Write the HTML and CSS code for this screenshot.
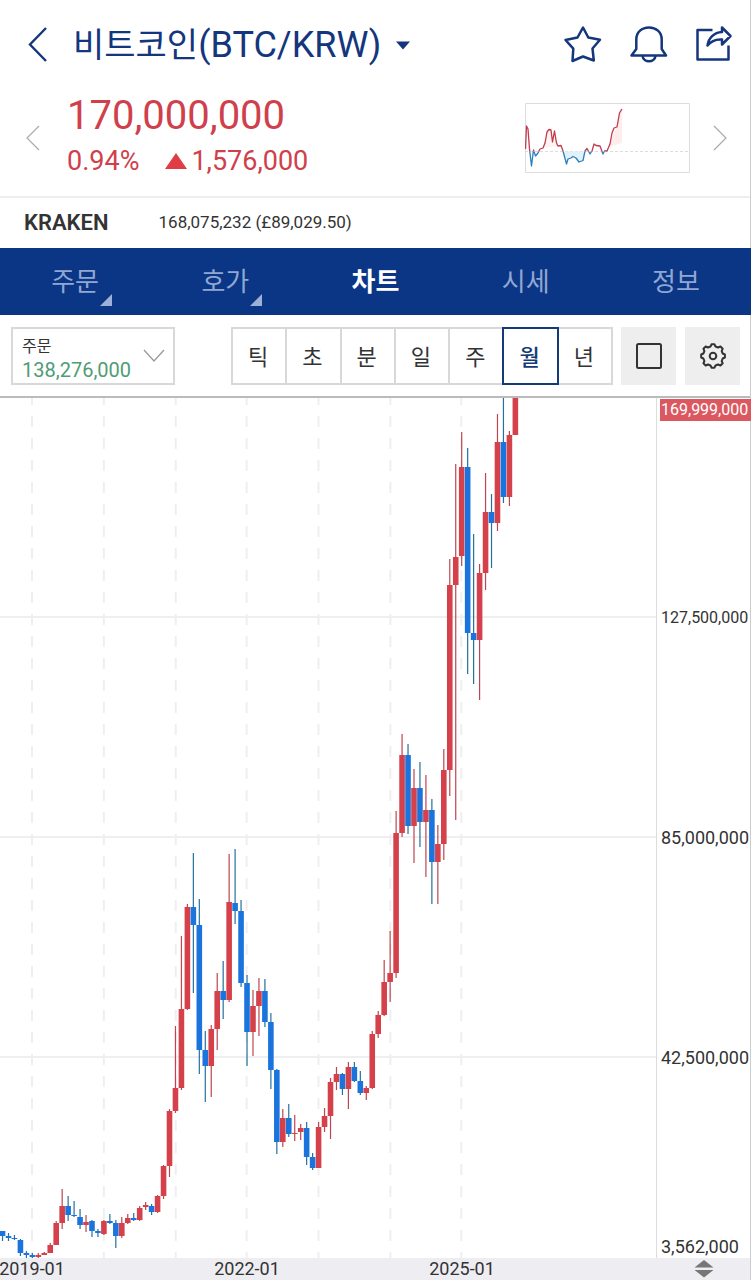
FILE: index.html
```html
<!DOCTYPE html>
<html lang="ko">
<head>
<meta charset="utf-8">
<meta name="viewport" content="width=device-width, initial-scale=1">
<title>비트코인(BTC/KRW)</title>
<link rel="stylesheet" href="styles.css">
</head>
<body>
<div class="app">
  <header class="topbar">
    <button class="icon-btn back" aria-label="뒤로">
      <svg width="20" height="36" viewBox="0 0 20 36"><path d="M18 2 2 18.500 18 35" fill="none" stroke="currentColor" stroke-width="2.400"/></svg>
    </button>
    <h1 class="title">
      <button class="title-btn" aria-haspopup="listbox"><span class="title-ko">비트코인</span><span>(BTC/KRW)</span>
        <svg class="caret" width="16" height="9" viewBox="0 0 16 9"><path d="M1 .5h14L8 8.500z" fill="currentColor"/></svg>
      </button>
    </h1>
    <div class="actions">
      <button class="icon-btn" aria-label="즐겨찾기">
        <svg width="40" height="40" viewBox="0 0 40 40"><path d="M20 3.500 25.300 13.500 37 15.800 29.500 24.500 30.800 36.500 20 32.500 9.500 37 10.300 24.700 2.500 16 14.500 13.500z" fill="none" stroke="currentColor" stroke-width="2.500" stroke-linejoin="round"/></svg>
      </button>
      <button class="icon-btn" aria-label="알림">
        <svg width="40" height="40" viewBox="0 0 40 40"><g fill="none" stroke="currentColor" stroke-width="2.500" stroke-linejoin="round"><path d="M2.500 31.500H37L32.700 25V15.500C32.700 8 27 3.500 20 3.500S7.300 8 7.300 15.500V25z"/><path d="M13.500 32c1 7 12 7 13 0"/></g></svg>
      </button>
      <button class="icon-btn" aria-label="공유">
        <svg width="40" height="40" viewBox="0 0 40 40"><g fill="none" stroke="currentColor" stroke-width="2.500" stroke-linejoin="round"><path d="M17.500 6H2.500V35.500H33.500V21.500"/><path d="M12.500 21.500C13.500 14 19 8.500 27 8V3.500L35.500 12 27 20.500V15.500C21 15 16 17 12.500 21.500z"/></g></svg>
      </button>
    </div>
  </header>

  <section class="quote">
    <button class="icon-btn pager" aria-label="이전 종목">
      <svg width="14" height="26" viewBox="0 0 14 26"><path d="M13 1 1 13l12 12" fill="none" stroke="currentColor" stroke-width="1.200"/></svg>
    </button>
    <div class="quote-text">
      <div class="price">170,000,000</div>
      <div class="change"><span>0.94%</span>
        <span class="diff"><svg width="22" height="16" viewBox="0 0 22 16"><path d="M11 0 22 16H0z" fill="#e03c46"/></svg>1,576,000</span>
      </div>
    </div>
    <svg class="spark" width="165" height="70" viewBox="0 0 165 70">
      <defs>
        <clipPath id="above"><path d="M0 0h165v48.500H0z"/></clipPath>
        <clipPath id="below"><path d="M0 48.500h165V70H0z"/></clipPath>
      </defs>
      <path d="M.5 .5h164v69H.5z" fill="none" stroke="#ddd"/>
      <path d="M0 48.500h165" stroke="#ddd" stroke-dasharray="3 2"/>
      <path d="M18 45 20 40 22 28 26 27 28 38 31 34 34 43z" fill="#fdf3f2"/>
      <path d="M84 44 86 36 91 25 95 6 97 6V40z" fill="#fdeeed"/>
      <path d="M38 48.500 42 60 45 55 49 54 53 59 58 57 60 48.500z" fill="#e3f1fa"/>
      <g fill="none" stroke-width="1.300" stroke-linejoin="round">
        <path id="trend" clip-path="url(#above)" stroke="#c23a4c" d="M.5 46 1.500 23 3 26 4.500 46 6.500 63 8.500 47 10.500 53 13 50 15 46 18 45 20 40 22 29 24 26.500 26 27 27.500 39 29.500 28 31.500 40 33 43 36 42.500 38 48 41.500 61 43 56 46 55 48 53.500 51 55 54 59 58 57.500 60 48 62 45.500 65 51 67 48 69 41 71 42.500 75 43 78 51 79.500 48 82 48 85 41 87 30 89 25 92 24 94.500 10 97 6"/>
        <path clip-path="url(#below)" stroke="#2a7fbd" d="M.5 46 1.500 23 3 26 4.500 46 6.500 63 8.500 47 10.500 53 13 50 15 46 18 45 20 40 22 29 24 26.500 26 27 27.500 39 29.500 28 31.500 40 33 43 36 42.500 38 48 41.500 61 43 56 46 55 48 53.500 51 55 54 59 58 57.500 60 48 62 45.500 65 51 67 48 69 41 71 42.500 75 43 78 51 79.500 48 82 48 85 41 87 30 89 25 92 24 94.500 10 97 6"/>
      </g>
    </svg>
    <button class="icon-btn pager" aria-label="다음 종목">
      <svg width="14" height="26" viewBox="0 0 14 26"><path d="M1 1l12 12L1 25" fill="none" stroke="currentColor" stroke-width="1.200"/></svg>
    </button>
  </section>

  <section class="exchange">
    <strong>KRAKEN</strong>
    <span>168,075,232 (£89,029.50)</span>
  </section>

  <nav class="tabs">
    <a class="tab more" href="#order">주문</a>
    <a class="tab more" href="#book">호가</a>
    <a class="tab active" href="#chart" aria-current="page">차트</a>
    <a class="tab" href="#market">시세</a>
    <a class="tab" href="#info">정보</a>
  </nav>

  <section class="toolbar">
    <div class="order">
      <label for="order-price">주문</label>
      <select id="order-price"><option>138,276,000</option></select>
      <svg class="order-arrow" width="22" height="14" viewBox="0 0 22 14"><path d="M1 1l10 11L21 1" fill="none" stroke="#999" stroke-width="1.300"/></svg>
    </div>
    <div class="periods">
      <button class="period">틱</button>
      <button class="period">초</button>
      <button class="period">분</button>
      <button class="period">일</button>
      <button class="period">주</button>
      <button class="period selected" aria-pressed="true">월</button>
      <button class="period">년</button>
    </div>
    <div class="tools">
      <button class="tool" aria-label="전체 화면">
        <svg width="26" height="26" viewBox="0 0 26 26"><rect x="1" y="1" width="24" height="24" rx="1.500" fill="none" stroke="#333" stroke-width="2"/></svg>
      </button>
      <button class="tool" aria-label="설정">
        <svg width="26" height="26" viewBox="0 0 26 26"><g fill="none" stroke="#333" stroke-width="2" stroke-linejoin="round"><path d="M10.500 3.500 11.500 1.300h3l1 2.200 2.500 1 2.500-1 2.200 2.200-1 2.500 1 2.300 2.200 1v3l-2.200 1-1 2.500 1 2.300-2.200 2.200-2.500-1-2.500 1-1 2.200h-3l-1-2.200-2.500-1-2.300 1-2.300-2.200 1-2.300-1-2.500-2.200-1v-3l2.200-1 1-2.300-1-2.500 2.300-2.200 2.300 1z"/><circle cx="13" cy="13" r="3.300"/></g></svg>
      </button>
    </div>
  </section>

  <main class="chart">
    <svg class="plot" id="plot" viewBox="0 0 657 860" preserveAspectRatio="none" role="img" aria-label="비트코인 월봉 차트"></svg>
    <div class="prices">
      <div class="long"><span class="now">169,999,000</span></div>
      <div class="long">127,500,000</div>
      <div>85,000,000</div>
      <div>42,500,000</div>
      <div class="lowest">3,562,000</div>
    </div>
  </main>

  <footer class="timeline">
    <div class="dates"><span>2019-01</span><span>2022-01</span><span>2025-01</span></div>
    <button class="icon-btn resize" aria-label="차트 높이 조절">
      <svg width="20" height="18" viewBox="0 0 20 18"><path d="M10 0 19.500 7.500H.5zM.5 10h19L10 17.500z" fill="#777"/></svg>
    </button>
  </footer>
</div>
<script src="chart.js"></script>
</body>
</html>
```
FILE: styles.css
```css
* { box-sizing: border-box; }

body {
  margin: 0;
  background: #fff;
  color: #333;
  font-family: Roboto, "Noto Sans CJK KR", sans-serif;
}

button, select { font: inherit; color: inherit; }

svg { display: block; flex: none; }

.app {
  display: flex;
  flex-direction: column;
  min-height: 100vh;
  border-right: 1px solid #ccc;
}

.icon-btn {
  display: flex;
  padding: 0;
  border: 0;
  background: none;
}

/* Header */
.topbar {
  display: flex;
  align-items: center;
  height: 88px;
  padding: 0 15px 0 28px;
  color: #14367c;
}

.title { flex: 1; margin: 0 0 0 25px; font-weight: 400; font-size: 36px; }

.title-btn {
  display: flex;
  align-items: center;
  padding: 2px 0 0;
  border: 0;
  background: none;
  line-height: 48px;
  white-space: nowrap;
}

.title-ko { font-size: 34px; }
.caret { margin-left: 14px; }
.actions { display: flex; gap: 26px; }

/* Quote */
.quote {
  display: flex;
  align-items: center;
  height: 110px;
  padding: 0 23px 8px 26px;
  border-bottom: 2px solid #eee;
}

.pager { color: #aaa; }

.quote-text { flex: 1; margin-left: 27px; color: #d0404c; }
.price { font-size: 40px; line-height: 46px; }
.change { display: flex; gap: 26px; font-size: 27px; line-height: 44px; }
.diff { display: flex; align-items: center; gap: 4px; }
.spark { margin-right: 23px; }

.exchange {
  display: flex;
  align-items: center;
  gap: 50px;
  height: 50px;
  padding: 0 24px 2px;
  font-size: 17px;
}

.exchange strong { font-size: 22px; font-weight: 600; }

/* Tabs */
.tabs {
  display: flex;
  height: 67px;
  margin-right: -1px;
  background: #0a3685;
}

.tab {
  position: relative;
  flex: 1;
  color: #91a7d3;
  font-size: 26px;
  line-height: 69px;
  text-align: center;
  text-decoration: none;
}

.tab.active { color: #fff; font-weight: 700; }

.more::after {
  content: "";
  position: absolute;
  right: 38px;
  bottom: 9px;
  border-left: 12px solid transparent;
  border-bottom: 12px solid #9db0d8;
}

/* Toolbar */
.toolbar {
  display: flex;
  align-items: center;
  height: 83px;
  padding: 0 10px 0 11px;
  border-bottom: 2px solid #b9bcba;
}

.order {
  position: relative;
  width: 164px;
  height: 58px;
  padding: 8px 9px 0;
  border: 2px solid #d8d8d8;
}

.order label { display: block; font-size: 16px; line-height: 20px; }

.order select {
  display: block;
  width: 100%;
  padding: 0;
  border: 0;
  appearance: none;
  background: none;
  color: #4f9c75;
  font-size: 20px;
  line-height: 26px;
}

.order-arrow { position: absolute; right: 8px; top: 20px; pointer-events: none; }

.periods {
  display: flex;
  flex: 1;
  margin: 0 8px 0 56px;
}

.period {
  flex: 1;
  height: 58px;
  margin-right: -2px;
  padding: 0 2px 2px 0;
  border: 2px solid #d8d8d8;
  background: #fff;
  font-size: 22px;
}

.period:last-child { margin-right: 0; }

.period.selected { z-index: 1; border-color: #143a78; color: #143a78; font-weight: 500; }

.tools { display: flex; gap: 9px; }

.tool {
  display: flex;
  align-items: center;
  justify-content: center;
  width: 55px;
  height: 58px;
  padding: 0;
  border: 0;
  background: #eee;
}

/* Chart */
.chart { display: flex; flex: 1; min-height: 480px; }

.plot {
  flex: 1;
  min-width: 0;
  height: auto;
  border-right: 1px solid #ddd;
}

.grid { stroke: #efeff0; stroke-width: 2; }
.grid.year { stroke-dasharray: 11 11; stroke-dashoffset: 4; }
.up { fill: #d4414b; }
.down { fill: #1b74dd; }
.wick.up { fill: #bd4650; }
.wick.down { fill: #24719f; }

.prices {
  display: grid;
  grid-template-rows: 110fr 220fr 220fr 220fr 90fr;
  width: 94px;
  margin-right: -1px;
  font-size: 18px;
}

.prices div { display: flex; align-items: center; padding: 0 0 2px 4px; }
.prices .long { font-size: 16px; }
.prices div:first-child { align-items: flex-start; padding: 1px 0 0 3px; }
.prices .lowest { align-items: flex-end; padding-bottom: 0; line-height: 22px; }

.now {
  flex: 1;
  padding-left: 1px;
  background: #dc5860;
  color: #fff;
  line-height: 22px;
}

.timeline {
  display: flex;
  align-items: center;
  height: 22px;
  background: #ededf2;
}

.dates {
  display: grid;
  flex: 1;
  grid-template-columns: minmax(0, 64fr) minmax(0, 366fr) minmax(0, 64fr) minmax(0, 163fr);
  font-size: 18px;
  line-height: 24px;
}

.dates span { justify-self: center; white-space: nowrap; }

.resize { justify-content: center; width: 93px; }
```
FILE: chart.js
```js
// Monthly candles from 2018-08: direction, body top, body bottom, high, low (plot units).
const candles = [
  ["d", 833, 838, 833, 843], ["d", 838, 840, 835, 843], ["d", 840, 841, 837, 842],
  ["d", 842, 855, 841, 858], ["d", 855, 857, 853, 860], ["d", 857, 859, 855, 860],
  ["u", 857, 859, 855, 860], ["u", 855, 857, 854, 857], ["u", 847, 855, 845, 855],
  ["u", 825, 847, 823, 847], ["u", 808, 825, 791, 831], ["d", 808, 817, 798, 823],
  ["d", 817, 818, 803, 819], ["d", 819, 827, 811, 831], ["u", 824, 827, 817, 834],
  ["d", 823, 833, 822, 839], ["d", 833, 835, 831, 839], ["u", 823, 836, 822, 837],
  ["d", 823, 825, 816, 826], ["d", 825, 838, 822, 850], ["u", 825, 838, 819, 840],
  ["u", 820, 825, 816, 826], ["d", 820, 822, 815, 823], ["u", 810, 822, 808, 823],
  ["u", 807, 809, 804, 812], ["d", 808, 814, 806, 817], ["u", 798, 814, 797, 815],
  ["u", 768, 798, 767, 801], ["u", 713, 768, 711, 779], ["u", 690, 713, 628, 715],
  ["u", 611, 690, 538, 692], ["u", 509, 611, 506, 612], ["d", 509, 527, 455, 595],
  ["d", 527, 652, 501, 676], ["d", 652, 668, 633, 704], ["u", 631, 668, 627, 699],
  ["u", 593, 631, 575, 652], ["d", 593, 602, 563, 621], ["u", 504, 602, 456, 604],
  ["d", 505, 513, 451, 526], ["d", 513, 585, 502, 589], ["d", 585, 634, 577, 668],
  ["u", 608, 634, 592, 658], ["u", 593, 608, 580, 638], ["d", 593, 624, 581, 629],
  ["d", 624, 672, 615, 691], ["d", 672, 744, 671, 756], ["u", 720, 744, 711, 749],
  ["d", 720, 736, 706, 739], ["u", 735, 736, 717, 743], ["u", 730, 734, 726, 742],
  ["d", 730, 759, 724, 767], ["d", 759, 770, 755, 772], ["u", 729, 770, 724, 770],
  ["u", 718, 729, 710, 734], ["u", 684, 718, 680, 741], ["u", 676, 684, 669, 692],
  ["d", 676, 691, 675, 697], ["u", 669, 691, 664, 711], ["d", 669, 683, 664, 684],
  ["d", 683, 695, 673, 697], ["u", 690, 695, 688, 702], ["u", 636, 690, 633, 691],
  ["u", 617, 636, 613, 640], ["u", 584, 617, 562, 618], ["u", 575, 584, 533, 604],
  ["u", 435, 575, 413, 580], ["u", 357, 435, 336, 439], ["d", 357, 428, 346, 436],
  ["u", 390, 428, 371, 465], ["d", 390, 424, 364, 449], ["u", 412, 424, 377, 479],
  ["d", 412, 464, 401, 506], ["u", 446, 464, 427, 506], ["u", 372, 446, 351, 462],
  ["u", 187, 372, 161, 398], ["u", 159, 187, 66, 422], ["u", 69, 158, 34, 168],
  ["d", 69, 235, 50, 276], ["d", 235, 242, 136, 286], ["u", 175, 242, 166, 302],
  ["u", 114, 175, 75, 192], ["d", 114, 125, 96, 170], ["u", 44, 125, 16, 133],
  ["d", 44, 99, 0, 105], ["u", 37, 99, 33, 108], ["u", 0, 37, 0, 37]
];

const WIDTH = 657;
const HEIGHT = 860;
const JANUARY = 5;
const STEP = 430 / 72;
const plot = document.getElementById("plot");
const centre = (index) => 32.4 + (index - JANUARY) * STEP;

function add(name, className, attributes) {
  const node = document.createElementNS("http://www.w3.org/2000/svg", name);
  node.setAttribute("class", className);
  for (const key in attributes) node.setAttribute(key, attributes[key]);
  plot.append(node);
}

for (let month = JANUARY; month < candles.length; month += 12) {
  const x = Math.round(centre(month));
  add("line", "grid year", { x1: x, x2: x, y1: 0, y2: HEIGHT });
}

for (const level of [1, 2, 3]) {
  const y = level * 220 - 1;
  add("line", "grid", { x1: 0, x2: WIDTH, y1: y, y2: y });
}

candles.forEach(([direction, top, bottom, high, low], index) => {
  const tone = direction === "u" ? "up" : "down";
  const x = centre(index);
  add("rect", "wick " + tone, { x: x - 0.6, y: high, width: 1.2, height: low - high });
  add("rect", tone, { x: x - 2.8, y: top, width: 5.6, height: bottom - top });
});
```
